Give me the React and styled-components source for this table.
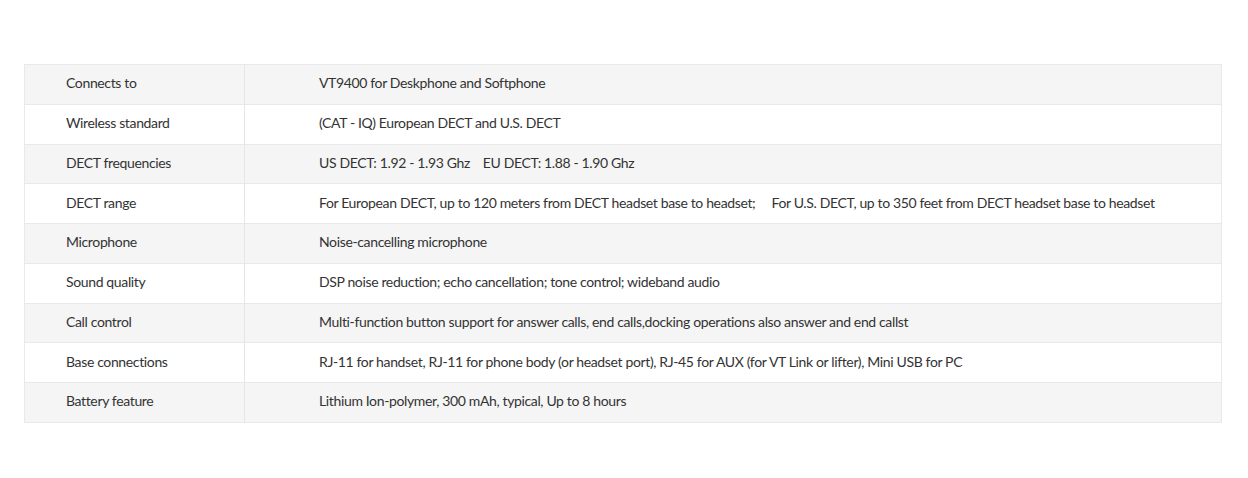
import React from 'react';
import styled, { createGlobalStyle } from 'styled-components';

const GlobalStyle = createGlobalStyle`
  html, body {
    margin: 0;
    padding: 0;
    background: #ffffff;
  }
  body {
    font-family: Lato, "Open Sans", "Liberation Sans", sans-serif;
  }
`;

const Page = styled.div`
  padding: 64px 26px 0 24px;
`;

const Table = styled.table`
  width: 100%;
  border-collapse: collapse;
  border: 1px solid #e9e9e9;
`;

const Row = styled.tr`
  height: 39.75px;
  background: ${(p) => (p.$shaded ? '#f5f5f5' : '#ffffff')};
  border-bottom: 1px solid #e9e9e9;
`;

const Cell = styled.td`
  padding-top: 0;
  padding-bottom: 3px;
  font-size: 14px;
  letter-spacing: -0.36px;
  color: #333333;
`;

const Label = styled(Cell)`
  width: 177px;
  padding-left: 41px;
  border-right: 1px solid #e6e6e6;
  white-space: nowrap;
`;

const Value = styled(Cell)`
  padding-left: 74px;
  white-space: pre;
`;

const specs = [
  ['Connects to', 'VT9400 for Deskphone and Softphone'],
  ['Wireless standard', '(CAT - IQ) European DECT and U.S. DECT'],
  ['DECT frequencies', 'US DECT: 1.92 - 1.93 Ghz    EU DECT: 1.88 - 1.90 Ghz'],
  [
    'DECT range',
    'For European DECT, up to 120 meters from DECT headset base to headset;     For U.S. DECT, up to 350 feet from DECT headset base to headset',
  ],
  ['Microphone', 'Noise-cancelling microphone'],
  ['Sound quality', 'DSP noise reduction; echo cancellation; tone control; wideband audio'],
  ['Call control', 'Multi-function button support for answer calls, end calls,docking operations also answer and end callst'],
  [
    'Base connections',
    'RJ-11 for handset, RJ-11 for phone body (or headset port), RJ-45 for AUX (for VT Link or lifter), Mini USB for PC',
  ],
  ['Battery feature', 'Lithium Ion-polymer, 300 mAh, typical, Up to 8 hours'],
];

export default function App() {
  return (
    <>
      <GlobalStyle />
      <Page>
        <Table>
          <tbody>
            {specs.map(([label, value], i) => (
              <Row key={label} $shaded={i % 2 === 0}>
                <Label>{label}</Label>
                <Value>{value}</Value>
              </Row>
            ))}
          </tbody>
        </Table>
      </Page>
    </>
  );
}
